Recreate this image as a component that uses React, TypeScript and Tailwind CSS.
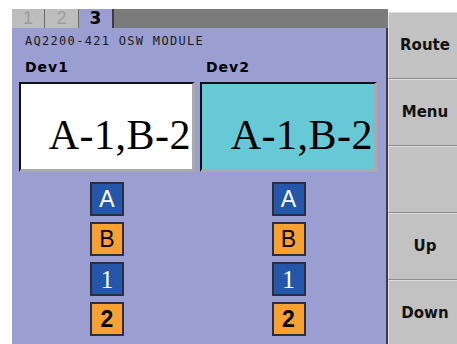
import React from 'react';

const mono = { fontFamily: '"DejaVu Sans Mono", "Liberation Mono", monospace' };

const Badge = ({ label, tone }: { label: string; tone: 'blue' | 'orange' }) => {
  const blue = tone === 'blue';
  return (
    <div
      className={`w-[34px] h-[34px] border-2 border-[#2e2e3a] flex items-center justify-center leading-none ${
        blue ? 'bg-[#2457a9] text-white' : 'bg-[#f7a132] text-black'
      }`}
    >
      {label}
    </div>
  );
};

const DevColumn = ({ name, tint }: { name: string; tint: string }) => {
  return (
    <div className="flex flex-col">
      {/* header */}
      <div className="pl-[6px] h-[16px] leading-[16px] text-[14px] font-bold tracking-[1px] text-black font-['DejaVu_Sans',sans-serif]">
        {name}
      </div>

      {/* route display */}
      <div
        className={`mt-[7px] h-[90px] border-t-2 border-l-2 border-r-[3px] border-b-[3px] border-t-[#111] border-l-[#111] border-r-[#a9a9b0] border-b-[#a9a9b0] ${tint} flex justify-end pr-[1px] pt-[30px]`}
      >
        <span className="text-[42px] leading-none text-black tracking-[0.5px] font-['Liberation_Serif',serif]">
          A-1,B-2
        </span>
      </div>

      {/* port badges */}
      <div className="mt-[10px] flex flex-col items-center gap-[6px]">
        <div className="font-['Liberation_Sans',sans-serif] text-[23px]">
          <Badge label="A" tone="blue" />
        </div>
        <div className="font-['Liberation_Sans',sans-serif] text-[23px]">
          <Badge label="B" tone="orange" />
        </div>
        <div className="font-['Liberation_Serif',serif] text-[25px]">
          <Badge label="1" tone="blue" />
        </div>
        <div className="font-['Liberation_Sans',sans-serif] font-bold text-[23px]">
          <Badge label="2" tone="orange" />
        </div>
      </div>
    </div>
  );
};

const SideButton = ({ label }: { label?: string }) => (
  <div className="h-[67px] shrink-0 bg-[#c2c2c2] border-t border-t-[#dcdcdc] border-b border-b-[#8c8c8c] border-l border-l-[#e2e2e2] flex items-center justify-center pl-[4px] text-[15px] font-bold text-[#111] font-['DejaVu_Sans',sans-serif]">
    {label}
  </div>
);

export default function App() {
  return (
    <div className="w-[457px] h-[344px] bg-white overflow-hidden flex pl-[12px]">
      {/* Left: tabs + module panel */}
      <div className="w-[376px] flex flex-col">
        {/* Tab strip */}
        <div className="mt-[9px] h-[19px] flex bg-[#7b7b7b]">
          <div className="w-[33px] bg-[#bdbdbd] border-r border-r-[#6a6a6a] flex items-center justify-center text-[18px] text-[#9c9c9c] font-['Liberation_Sans',sans-serif]">
            1
          </div>
          <div className="w-[34px] bg-[#bdbdbd] border-r border-r-[#6a6a6a] flex items-center justify-center text-[18px] text-[#9c9c9c] font-['Liberation_Sans',sans-serif]">
            2
          </div>
          <div className="w-[33px] bg-[#9a9ed0] flex items-center justify-center text-[17px] font-bold text-black font-['DejaVu_Sans',sans-serif]">
            3
          </div>
          <div className="w-[2px] bg-[#3c3c3c]" />
        </div>

        {/* Module panel */}
        <div className="flex-1 bg-[#9a9ed0] border-r-2 border-r-[#3a3a48] pl-[7px] pr-[8px] pt-[6px]">
          <div
            className="pl-[6px] h-[14px] leading-[14px] text-[12px] tracking-[1.3px] text-[#1a1a1a]"
            style={mono}
          >
            AQ2200-421 OSW MODULE
          </div>

          <div className="mt-[11px] grid grid-cols-[176px_177px] gap-x-[5px]">
            <DevColumn name="Dev1" tint="bg-white" />
            <DevColumn name="Dev2" tint="bg-[#66c9d5]" />
          </div>
        </div>
      </div>

      {/* Right: soft keys */}
      <div className="flex-1 flex flex-col pt-[12px]">
        <SideButton label="Route" />
        <SideButton label="Menu" />
        <SideButton />
        <SideButton label="Up" />
        <SideButton label="Down" />
      </div>
    </div>
  );
}
